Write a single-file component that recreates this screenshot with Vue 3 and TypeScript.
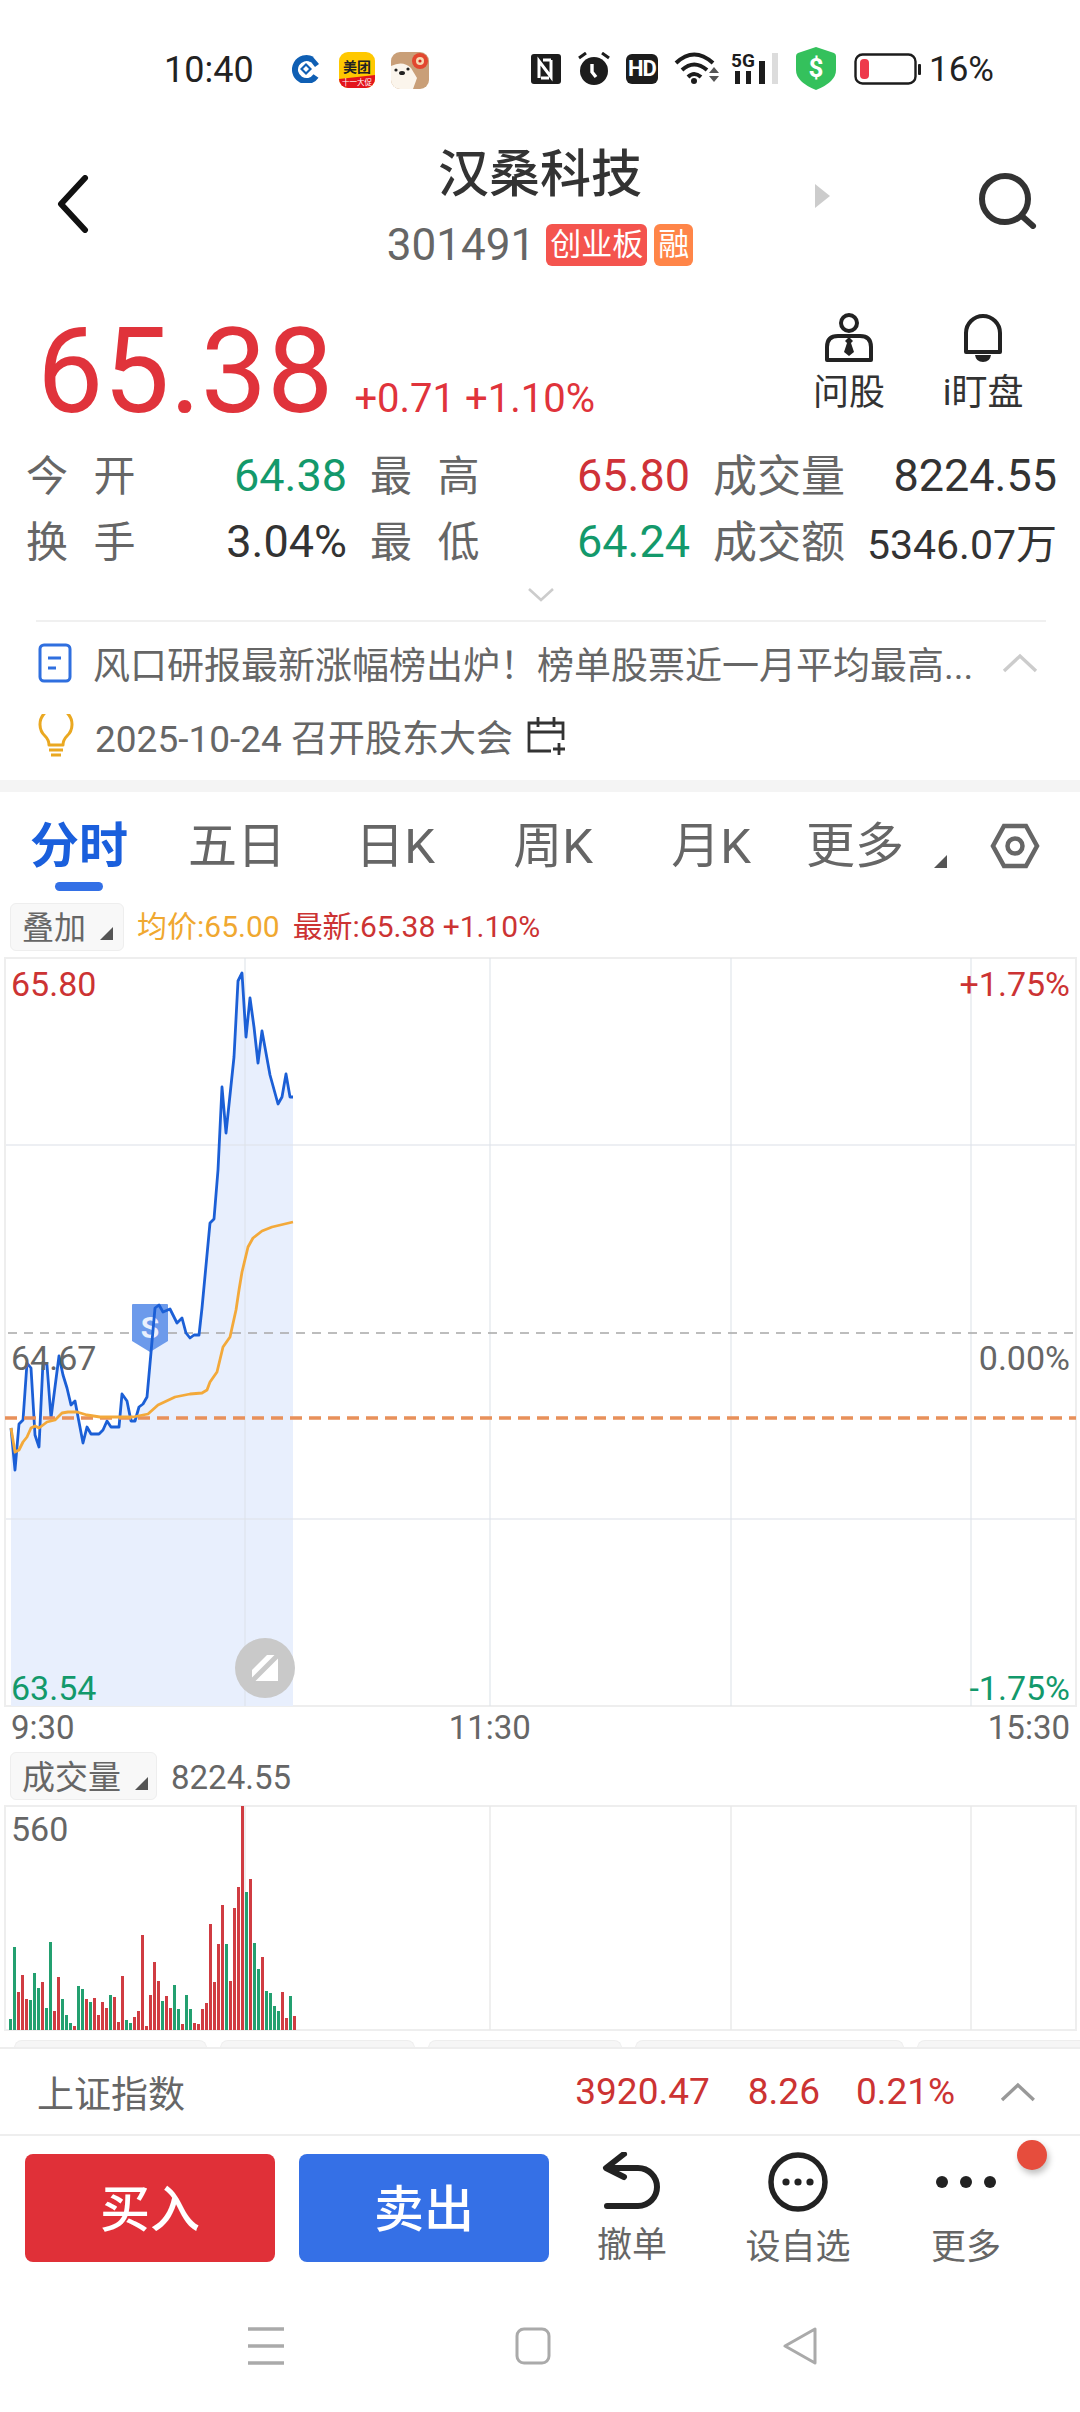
<script setup lang="ts">
const pricePts: [number, number][] = [
  [11, 1428], [15, 1470], [19, 1424], [23, 1420], [27, 1363], [31, 1368], [35, 1435], [39, 1447], [43, 1362], [47, 1365],
  [51, 1418], [59, 1356], [63, 1375], [67, 1388], [71, 1405], [75, 1401], [83, 1443], [87, 1427], [91, 1434], [99, 1434],
  [103, 1430], [107, 1421], [111, 1427], [119, 1427], [122, 1394], [127, 1401], [131, 1421], [135, 1421], [139, 1407], [143, 1404],
  [147, 1397], [155, 1308], [159, 1305], [163, 1312], [170, 1309], [177, 1323], [182, 1318], [186, 1333], [190, 1338], [194, 1335],
  [199, 1335], [202, 1308], [210, 1223], [214, 1219], [218, 1170], [222, 1087], [226, 1133], [234, 1057], [238, 981], [242, 973],
  [246, 1037], [250, 998], [254, 1027], [258, 1063], [262, 1031], [270, 1075], [278, 1104], [282, 1097], [286, 1074], [290, 1097], [293, 1097],
]
const avgPts: [number, number][] = [
  [11, 1428], [15, 1452], [19, 1450], [23, 1442], [27, 1437], [31, 1428], [35, 1426], [39, 1428], [47, 1422], [55, 1420],
  [62, 1413], [68, 1412], [77, 1412], [87, 1415], [100, 1417], [133, 1417], [148, 1414], [158, 1405], [175, 1397], [190, 1394],
  [202, 1393], [207, 1390], [210, 1382], [217, 1372], [223, 1347], [230, 1337], [236, 1310], [239, 1290], [242, 1272], [248, 1247],
  [253, 1238], [262, 1231], [272, 1227], [293, 1222],
]
const toPoints = (pts: [number, number][]) => pts.map(p => p.join(',')).join(' ')
const priceLine = toPoints(pricePts)
const avgLine = toPoints(avgPts)
const priceFill = `11,1706 ${priceLine} 293,1706`

// 量柱：g 绿 r 红，数值是柱顶 y
const volTops: [string, number][] = [
  ['g', 2019], ['g', 1947], ['r', 1992], ['r', 1975], ['r', 1999], ['g', 2000], ['g', 1973], ['g', 1988], ['r', 1982], ['g', 2008],
  ['g', 1942], ['r', 2011], ['r', 1977], ['g', 1999], ['g', 2015], ['g', 2023], ['r', 2026], ['g', 1986], ['g', 1989], ['r', 1999],
  ['g', 2002], ['r', 1998], ['r', 2015], ['r', 2002], ['r', 2008], ['g', 1995], ['r', 1997], ['r', 2022], ['r', 1976], ['g', 2020],
  ['g', 2023], ['r', 2017], ['r', 2011], ['r', 1935], ['r', 2026], ['r', 1995], ['r', 1962], ['r', 1981], ['g', 2001], ['r', 1996],
  ['r', 2008], ['g', 1985], ['g', 2009], ['r', 2024], ['g', 1995], ['g', 2009], ['r', 2023], ['r', 2024], ['r', 2009], ['r', 2003],
  ['r', 1924], ['r', 1982], ['r', 1944], ['r', 1905], ['g', 1944], ['r', 1981], ['r', 1908], ['r', 1887], ['r', 1806], ['g', 1892],
  ['r', 1879], ['g', 1943], ['g', 1969], ['r', 1957], ['g', 1991], ['g', 1993], ['g', 2006], ['g', 2011], ['r', 1992], ['r', 2018],
  ['g', 1996], ['r', 2016],
]
const bars = volTops.map(([c, top], i) => ({
  x: 9 + i * 4,
  y: top,
  h: 2030 - top,
  fill: c === 'g' ? '#23a070' : '#d03c42',
}))

const tabs = ['五日', '日K', '周K', '月K']
const grid = [245, 490, 731, 971]
const strip = [193, 195, 194, 269, 180]
</script>

<template>
  <div class="page">
    <div class="status">
      <span class="time">10:40</span>
      <svg class="bank" width="28" height="28" viewBox="0 0 28 28">
        <path d="M20 4.5A11.5 11.5 0 1 0 24 21" fill="none" stroke="#0f5fb4" stroke-width="6" />
        <path d="M15 2l6 0 6 7-4 3z" fill="#0f5fb4" />
        <path d="M14 8l6 6-6 6-6-6z" fill="#0f5fb4" />
        <path d="M14 11l3 3-3 3-3-3z" fill="#fff" />
      </svg>
      <svg class="meituan" width="36" height="36" viewBox="0 0 36 36">
        <rect width="36" height="36" rx="9" fill="#ffc800" />
        <path d="M0 27l36-4v4a9 9 0 0 1-9 9H9a9 9 0 0 1-9-9z" fill="#e3141c" />
        <text x="18" y="20" font-size="14" font-weight="700" text-anchor="middle" fill="#222">美团</text>
        <text x="18" y="33" font-size="7.5" text-anchor="middle" fill="#fff">十一大促</text>
      </svg>
      <svg class="dog" width="38" height="37" viewBox="0 0 38 37">
        <rect width="38" height="37" rx="9" fill="#c99f78" />
        <path d="M0 14q12-6 20 2l6 10-4 11H9a9 9 0 0 1-9-9z" fill="#fbf5ec" />
        <circle cx="29" cy="9" r="8" fill="#e2472f" />
        <circle cx="29" cy="9" r="4" fill="#f7d9b2" />
        <circle cx="29" cy="9" r="1.6" fill="#d6261b" />
        <circle cx="5" cy="18" r="1.6" fill="#222" />
        <circle cx="17" cy="17" r="1.6" fill="#222" />
        <ellipse cx="11" cy="21" rx="3" ry="2" fill="#222" />
      </svg>

      <svg class="nfc" width="30" height="30" viewBox="0 0 30 30">
        <rect width="30" height="30" rx="3" fill="#1c1c1c" />
        <path d="M8 24V7l12 16V6M12 6h8M10 24h8" fill="none" stroke="#fff" stroke-width="3" />
      </svg>
      <svg class="alarm" width="32" height="33" viewBox="0 0 32 33">
        <circle cx="16" cy="19" r="14" fill="#1c1c1c" />
        <path d="M1 6l7-5M31 6l-7-5" stroke="#1c1c1c" stroke-width="3" />
        <path d="M14 12v8l4 5" fill="none" stroke="#fff" stroke-width="3.4" />
      </svg>
      <span class="hd">HD</span>
      <svg class="wifi" width="46" height="33" viewBox="0 0 46 33">
        <path d="M2 11q18-17 37 0M8 18q12-11 25 0M14 25q6-6 13 0" fill="none" stroke="#1c1c1c" stroke-width="4" />
        <circle cx="20" cy="29" r="3" fill="#1c1c1c" />
        <path d="M35 21l5-6 5 6zM35 24h10l-5 6z" fill="#555" />
      </svg>
      <svg class="signal" width="48" height="32" viewBox="0 0 48 32">
        <text x="0" y="15" font-size="19" font-weight="700" fill="#1c1c1c">5G</text>
        <rect x="4" y="19" width="5" height="13" fill="#1c1c1c" />
        <rect x="15" y="19" width="5" height="13" fill="#1c1c1c" />
        <rect x="28" y="9" width="6" height="23" fill="#1c1c1c" />
        <rect x="41" y="1" width="6" height="31" fill="#dcdcdc" />
      </svg>
      <svg class="shield" width="40" height="43" viewBox="0 0 40 43">
        <path d="M20 0l18 6q2 1 2 3v14q0 12-20 20Q0 35 0 23V9q0-2 2-3z" fill="#34c15c" />
        <text x="20" y="30" font-size="26" font-weight="700" text-anchor="middle" fill="#fff">$</text>
      </svg>
      <svg class="battery" width="68" height="32" viewBox="0 0 68 32">
        <rect x="1.5" y="1.5" width="60" height="29" rx="7" fill="none" stroke="#1c1c1c" stroke-width="2.4" />
        <rect x="6" y="6" width="9" height="20" rx="4" fill="#ee3a4c" />
        <rect x="64" y="11" width="3" height="11" rx="1" fill="#1c1c1c" />
      </svg>
      <span class="pct">16%</span>
    </div>

    <div class="head">
      <svg class="back" width="32" height="58" viewBox="0 0 32 58">
        <path d="M28 3L4 29l24 26" fill="none" stroke="#111" stroke-width="6" stroke-linecap="round" stroke-linejoin="round" />
      </svg>
      <div class="head-mid">
        <div class="name">汉桑科技</div>
        <div class="code-row">
          <span class="code">301491</span>
          <span class="tag tag-red">创业板</span>
          <span class="tag tag-orange">融</span>
        </div>
      </div>
      <div class="head-right">
        <i class="next" />
        <svg class="search" width="60" height="56" viewBox="0 0 60 56">
          <circle cx="28" cy="26" r="23" fill="none" stroke="#333" stroke-width="6" />
          <path d="M46 44l10 9" stroke="#333" stroke-width="6" stroke-linecap="round" />
        </svg>
      </div>
    </div>

    <div class="quote">
      <span class="price">65.38</span>
      <span class="change">+0.71 +1.10%</span>
      <div class="quote-btns">
        <div class="qbtn">
          <svg width="48" height="50" viewBox="0 0 48 50">
            <circle cx="24" cy="10" r="8" fill="none" stroke="#222" stroke-width="4" />
            <path d="M2 47V34q0-11 11-11h22q11 0 11 11v13z" fill="none" stroke="#222" stroke-width="4" stroke-linejoin="round" />
            <path d="M24 24l4 4-2 2 3 9-5 4-5-4 3-9-2-2z" fill="#222" />
          </svg>
          <span>问股</span>
        </div>
        <div class="qbtn">
          <svg width="40" height="50" viewBox="0 0 40 50">
            <path d="M3 39V20a17 17 0 0 1 34 0v19z" fill="none" stroke="#222" stroke-width="4" stroke-linejoin="round" />
            <path d="M12 42h16q-1 7-8 7t-8-7z" fill="#222" />
          </svg>
          <span>i盯盘</span>
        </div>
      </div>
    </div>

    <div class="stats">
      <div class="stat"><span class="label">今 开</span><span class="green">64.38</span></div>
      <div class="stat"><span class="label">最 高</span><span class="red">65.80</span></div>
      <div class="stat"><span class="label">成交量</span><span class="dark">8224.55</span></div>
      <div class="stat"><span class="label">换 手</span><span class="dark">3.04%</span></div>
      <div class="stat"><span class="label">最 低</span><span class="green">64.24</span></div>
      <div class="stat"><span class="label">成交额</span><span class="dark small">5346.07万</span></div>
    </div>

    <div class="expand">
      <svg width="28" height="15" viewBox="0 0 28 15">
        <path d="M2 2l12 11L26 2" fill="none" stroke="#ccc" stroke-width="2.6" />
      </svg>
    </div>

    <div class="news">
      <svg width="34" height="40" viewBox="0 0 34 40">
        <rect x="2" y="2" width="30" height="36" rx="4" fill="none" stroke="#2f6fdf" stroke-width="3" />
        <path d="M10 15h13M10 25h8" stroke="#2f6fdf" stroke-width="3" />
      </svg>
      <span class="news-text">风口研报最新涨幅榜出炉！榜单股票近一月平均最高...</span>
      <svg class="news-up" width="36" height="20" viewBox="0 0 36 20">
        <path d="M2 18L18 3l16 15" fill="none" stroke="#ccc" stroke-width="3.4" />
      </svg>
    </div>
    <div class="agenda">
      <svg width="36" height="44" viewBox="0 0 36 44">
        <path d="M11 31q0-5-4-9a16 16 0 1 1 22 0q-4 4-4 9z" fill="none" stroke="#eaa821" stroke-width="3" stroke-linejoin="round" />
        <path d="M11 36h14M13 41h10" stroke="#eaa821" stroke-width="3" />
      </svg>
      <span class="news-text">2025-10-24 召开股东大会</span>
      <svg width="40" height="40" viewBox="0 0 40 40">
        <path d="M24 35H2V7h34v17M2 16h34M11 1v10M27 1v10M32 27v12M26 33h12" fill="none" stroke="#333" stroke-width="2.8" />
      </svg>
    </div>

    <div class="band" />

    <div class="tabs">
      <div class="tab active">分时</div>
      <div v-for="t in tabs" :key="t" class="tab">{{ t }}</div>
      <div class="tab more">更多<i class="corner" /></div>
      <svg class="hex" width="50" height="46" viewBox="0 0 50 46">
        <path d="M14 3h22l11 20-11 20H14L3 23z" fill="none" stroke="#666" stroke-width="4.5" />
        <circle cx="25" cy="23" r="7.5" fill="none" stroke="#666" stroke-width="4.5" />
      </svg>
    </div>

    <div class="legend">
      <div class="drop">叠加<i class="corner" /></div>
      <span class="avg">均价:65.00</span>
      <span class="last">最新:65.38 +1.10%</span>
    </div>

    <div class="chart">
      <svg class="plot" width="1080" height="751" viewBox="0 957 1080 751">
        <rect x="5" y="958" width="1071" height="748" fill="#fff" stroke="#eee" stroke-width="2" />
        <polygon :points="priceFill" fill="#e8effd" />
        <path d="M6 1145H1075M6 1519H1075" stroke="#dfe3ea" stroke-width="1.4" opacity=".75" />
        <path v-for="x in grid" :key="x" :d="`M${x} 958V1706`" stroke="#dfe3ea" stroke-width="1.4" opacity=".75" />
        <path d="M8 1333H1075" stroke="#a8a8a8" stroke-width="1.4" stroke-dasharray="9 7" />
        <path d="M132 1305q0-1 1-1h34q1 0 1 1v36l-18 11-18-11z" fill="#6c9aeb" />
        <text x="150" y="1338" font-size="30" font-weight="700" text-anchor="middle" fill="#e9f0fd">S</text>
        <polyline :points="priceLine" fill="none" stroke="#1b5fd6" stroke-width="2.8" stroke-linejoin="round" />
        <path d="M5 1418H1076" stroke="#e8905a" stroke-width="3.5" stroke-dasharray="12 7" />
        <polyline :points="avgLine" fill="none" stroke="#f3a93a" stroke-width="2.8" stroke-linejoin="round" />
        <circle cx="265" cy="1668" r="30" fill="#c9c9c9" />
        <path d="M252 1655h26v26h-26z" fill="#fff" />
        <path d="M252 1681l26-26" stroke="#c9c9c9" stroke-width="5" />
        <path d="M252 1655h15l-15 15z" fill="#c9c9c9" />
      </svg>
      <span class="axis red-t tl">65.80</span>
      <span class="axis red-t tr">+1.75%</span>
      <span class="axis gray-t ml">64.67</span>
      <span class="axis gray-t mr">0.00%</span>
      <span class="axis green-t bl">63.54</span>
      <span class="axis green-t br">-1.75%</span>
    </div>

    <div class="times">
      <span>9:30</span>
      <span class="mid-time">11:30</span>
      <span>15:30</span>
    </div>

    <div class="legend vol-legend">
      <div class="drop vol-drop">成交量<i class="corner" /></div>
      <span class="vol-num">8224.55</span>
    </div>

    <div class="chart vol">
      <svg class="plot" width="1080" height="226" viewBox="0 1805 1080 226">
        <rect x="5" y="1806" width="1071" height="224" fill="#fff" stroke="#eee" stroke-width="2" />
        <path v-for="x in grid" :key="x" :d="`M${x} 1806V2030`" stroke="#e8e8e8" stroke-width="1.4" />
        <rect v-for="b in bars" :key="b.x" :x="b.x" :y="b.y" width="3" :height="b.h" :fill="b.fill" />
      </svg>
      <span class="axis gray-t vol-max">560</span>
    </div>

    <div class="strip">
      <i v-for="(w, i) in strip" :key="i" :style="{ width: `${w}px` }" />
    </div>

    <div class="index">
      <span class="index-name">上证指数</span>
      <span class="index-val">3920.47</span>
      <span class="index-val v2">8.26</span>
      <span class="index-val v3">0.21%</span>
      <svg width="36" height="20" viewBox="0 0 36 20">
        <path d="M2 18L18 3l16 15" fill="none" stroke="#999" stroke-width="3.4" />
      </svg>
    </div>

    <div class="actions">
      <div class="btn buy">买入</div>
      <div class="btn sell">卖出</div>
      <div class="act a1">
        <svg width="60" height="58" viewBox="0 0 60 58">
          <path d="M22 2L4 16l18 9" fill="none" stroke="#222" stroke-width="6" stroke-linecap="round" stroke-linejoin="round" />
          <path d="M6 16h30a19 19 0 0 1 0 38H5" fill="none" stroke="#222" stroke-width="6" stroke-linecap="round" />
        </svg>
        <span>撤单</span>
      </div>
      <div class="act a2">
        <svg width="60" height="60" viewBox="0 0 60 60">
          <circle cx="30" cy="30" r="27" fill="none" stroke="#222" stroke-width="5.5" />
          <circle cx="18" cy="30" r="3.6" fill="#222" />
          <circle cx="30" cy="30" r="3.6" fill="#222" />
          <circle cx="42" cy="30" r="3.6" fill="#222" />
        </svg>
        <span>设自选</span>
      </div>
      <div class="act a3">
        <svg width="60" height="60" viewBox="0 0 60 60">
          <circle cx="6" cy="30" r="6" fill="#222" />
          <circle cx="30" cy="30" r="6" fill="#222" />
          <circle cx="54" cy="30" r="6" fill="#222" />
        </svg>
        <span>更多</span>
        <i class="dot" />
      </div>
    </div>

    <div class="nav">
      <svg width="36" height="38" viewBox="0 0 36 38">
        <path d="M0 2h36M0 19h36M0 36h36" stroke="#aaa" stroke-width="3.4" />
      </svg>
      <svg width="36" height="38" viewBox="0 0 36 38">
        <rect x="2" y="2" width="32" height="34" rx="7" fill="none" stroke="#aaa" stroke-width="3" />
      </svg>
      <svg width="36" height="38" viewBox="0 0 36 38">
        <path d="M33 2v34L3 19z" fill="none" stroke="#aaa" stroke-width="3" stroke-linejoin="round" />
      </svg>
    </div>
  </div>
</template>

<style>
html,
body {
  margin: 0;
  background: #fff;
}
</style>

<style scoped>
.page {
  width: 1080px;
  height: 2412px;
  overflow: hidden;
  background: #fff;
  color: #333;
  font-family: Roboto, "Noto Sans CJK SC", sans-serif;
}

.status {
  height: 140px;
  box-sizing: border-box;
  padding: 38px 0 0 164px;
  display: flex;
  align-items: flex-start;
}
.time {
  width: 90px;
  margin-top: 10px;
  font-size: 36px;
  line-height: 44px;
  color: #222;
}
.bank { margin: 17px 0 0 38px; }
.meituan { margin: 14px 0 0 19px; }
.dog { margin: 14px 0 0 16px; }
.nfc { margin: 16px 0 0 102px; }
.alarm { margin: 14px 0 0 17px; }
.hd {
  width: 32px;
  height: 30px;
  margin: 16px 0 0 16px;
  border-radius: 6px;
  background: #1c1c1c;
  color: #fff;
  font-size: 22px;
  font-weight: 700;
  letter-spacing: -1px;
  line-height: 30px;
  text-align: center;
}
.wifi { margin: 14px 0 0 16px; }
.signal { margin: 14px 0 0 11px; }
.shield { margin: 9px 0 0 17px; }
.battery { margin: 15px 0 0 18px; }
.pct {
  margin: 10px 0 0 7px;
  font-size: 35px;
  line-height: 44px;
  color: #222;
}

.head {
  height: 140px;
  display: grid;
  grid-template-columns: 1fr auto 1fr;
}
.back { margin: 35px 0 0 57px; }
.head-mid { text-align: center; }
.name {
  font-size: 51px;
  font-weight: 500;
  line-height: 70px;
  color: #333;
}
.code-row {
  height: 70px;
  display: flex;
  align-items: center;
  gap: 7px;
}
.code {
  margin-right: 4px;
  font-size: 44px;
  color: #666;
}
.tag {
  height: 42px;
  padding: 0 4px;
  border-radius: 6px;
  color: #fff;
  font-size: 31px;
  line-height: 42px;
}
.tag-red { background: #f4544e; }
.tag-orange { background: #ff8548; }
.head-right {
  display: flex;
  align-items: flex-start;
}
.next {
  width: 0;
  height: 0;
  margin: 44px 0 0 122px;
  border-left: 15px solid #ccc;
  border-top: 12px solid transparent;
  border-bottom: 12px solid transparent;
}
.search { margin: 33px 0 0 147px; }

.quote {
  height: 164px;
  padding-left: 37px;
  display: flex;
  align-items: baseline;
}
.price {
  font-size: 118px;
  line-height: 184px;
  color: #e0333b;
}
.change {
  margin-left: 21px;
  font-size: 40px;
  color: #e0333b;
}
.quote-btns {
  margin-left: auto;
  margin-right: 61px;
  align-self: flex-start;
  padding-top: 33px;
  display: flex;
  gap: 62px;
}
.qbtn {
  width: 72px;
  display: flex;
  flex-direction: column;
  align-items: center;
  gap: 10px;
  font-size: 36px;
  line-height: 40px;
  white-space: nowrap;
}

.stats {
  margin-top: -2px;
  padding-left: 26px;
  display: grid;
  grid-template-columns: 321px 320px 344px;
  grid-auto-rows: 66px;
  column-gap: 23px;
}
.stat {
  display: flex;
  justify-content: space-between;
  align-items: center;
  font-size: 45px;
}
.label {
  margin-bottom: 5px;
  font-size: 42px;
  color: #666;
  word-spacing: 15px;
  white-space: pre;
}
.stat:nth-child(3n) .label { font-size: 44px; }
.green { color: #13996b; }
.red { color: #cf3238; }
.dark { color: #333; }
.small { font-size: 41px; }

.expand {
  height: 48px;
  margin: 0 34px 0 36px;
  border-bottom: 2px solid #f0f0f0;
  display: flex;
  justify-content: center;
  padding-top: 13px;
  box-sizing: border-box;
}

.news,
.agenda {
  padding-left: 38px;
  display: flex;
  align-items: center;
}
.news { height: 81px; }
.agenda { height: 66px; margin-bottom: 11px; }
.news svg:first-child,
.agenda svg:first-child { flex: none; }
.news-text {
  margin-left: 21px;
  font-size: 37px;
  color: #666;
  white-space: nowrap;
}
.news-up { margin-left: 29px; }
.agenda svg:last-child { margin-left: 14px; }

.band {
  height: 12px;
  background: #f4f4f4;
}

.tabs {
  position: relative;
  height: 109px;
  display: flex;
}
.tab {
  position: relative;
  width: 158px;
  font-size: 49px;
  line-height: 110px;
  color: #666;
  text-align: center;
}
.tab.active {
  color: #1a5fdc;
  font-weight: 700;
}
.tab.active::after {
  content: "";
  position: absolute;
  left: 55px;
  top: 90px;
  width: 48px;
  height: 9px;
  border-radius: 5px;
  background: #3370e6;
}
.tab.more {
  text-align: left;
  padding-left: 16px;
  box-sizing: border-box;
  white-space: nowrap;
}
.tab .corner {
  position: absolute;
  left: 144px;
  top: 63px;
}
.corner {
  display: inline-block;
  width: 0;
  height: 0;
  border-style: solid;
  border-width: 0 0 13px 13px;
  border-color: transparent transparent #555 transparent;
}
.hex { margin: 31px 0 0 42px; }

.legend {
  height: 56px;
  box-sizing: border-box;
  padding: 2px 0 0 10px;
  display: flex;
  font-size: 30px;
}
.drop {
  width: 114px;
  height: 48px;
  box-sizing: border-box;
  padding: 2px 0 0 11px;
  border: 1px solid #eee;
  border-radius: 6px;
  background: #f8f8f8;
  color: #666;
  font-size: 32px;
  line-height: 44px;
  display: flex;
  align-items: center;
  white-space: nowrap;
}
.drop .corner { margin: 10px 0 0 14px; }
.avg {
  margin-left: 13px;
  line-height: 48px;
  color: #f0a830;
}
.last {
  margin-left: 13px;
  line-height: 48px;
  color: #cc3333;
}

.chart {
  position: relative;
  height: 751px;
}
.plot { display: block; }
.axis {
  position: absolute;
  font-size: 34px;
  line-height: 36px;
}
.red-t { color: #cc3333; }
.gray-t { color: #666; }
.green-t { color: #13996b; }
.tl { left: 11px; top: 9px; }
.tr { right: 10px; top: 9px; }
.ml { left: 11px; top: 383px; }
.mr { right: 10px; top: 383px; }
.bl { left: 11px; top: 713px; }
.br { right: 10px; top: 713px; }

.times {
  height: 44px;
  padding: 0 10px 0 11px;
  display: flex;
  justify-content: space-between;
  font-size: 33px;
  line-height: 40px;
  color: #666;
}
.mid-time { margin-right: 83px; }

.vol-legend {
  height: 54px;
  padding-top: 0;
  font-size: 33px;
}
.vol-drop {
  width: 147px;
  padding-top: 4px;
  font-size: 33px;
}
.vol-num {
  margin-left: 14px;
  line-height: 52px;
  color: #666;
}

.chart.vol { height: 226px; margin-top: -1px; }
.vol-max { left: 11px; top: 6px; }

.strip {
  height: 18px;
  box-sizing: border-box;
  padding: 9px 0 0 14px;
  border-bottom: 2px solid #eee;
  display: flex;
  gap: 13px;
  overflow: hidden;
}
.strip i {
  flex: none;
  box-sizing: border-box;
  height: 9px;
  background: #f6f6f6;
  border: 1px solid #eee;
  border-bottom: 0;
  border-radius: 8px 8px 0 0;
}

.index {
  height: 87px;
  box-sizing: border-box;
  padding: 0 44px 0 37px;
  border-bottom: 2px solid #eee;
  display: flex;
  align-items: center;
}
.index-name {
  width: 541px;
  font-size: 37px;
  color: #666;
}
.index-val {
  font-size: 37px;
  color: #cc3333;
}
.v2 { margin-left: 38px; }
.v3 { margin-left: 36px; }
.index svg { margin-left: 45px; }

.actions {
  position: relative;
  height: 164px;
  box-sizing: border-box;
  padding: 18px 0 0 25px;
  display: flex;
}
.btn {
  width: 250px;
  height: 108px;
  margin-right: 24px;
  border-radius: 8px;
  color: #fff;
  font-size: 50px;
  font-weight: 500;
  line-height: 112px;
  text-align: center;
}
.buy { background: #e03038; }
.sell { background: #3570e6; }
.act {
  position: absolute;
  top: 16px;
  width: 120px;
  display: flex;
  flex-direction: column;
  align-items: center;
  gap: 15px;
  font-size: 35px;
  line-height: 42px;
  color: #666;
}
.a1 { left: 572px; }
.a2 { left: 738px; }
.a3 { left: 906px; }
.dot {
  position: absolute;
  left: 111px;
  top: -12px;
  width: 30px;
  height: 30px;
  border-radius: 50%;
  background: #e64d3d;
  box-shadow: 2px 4px 6px rgba(0, 0, 0, 0.25);
}

.nav {
  padding: 27px 262px 0 248px;
  display: flex;
  justify-content: space-between;
}
</style>
